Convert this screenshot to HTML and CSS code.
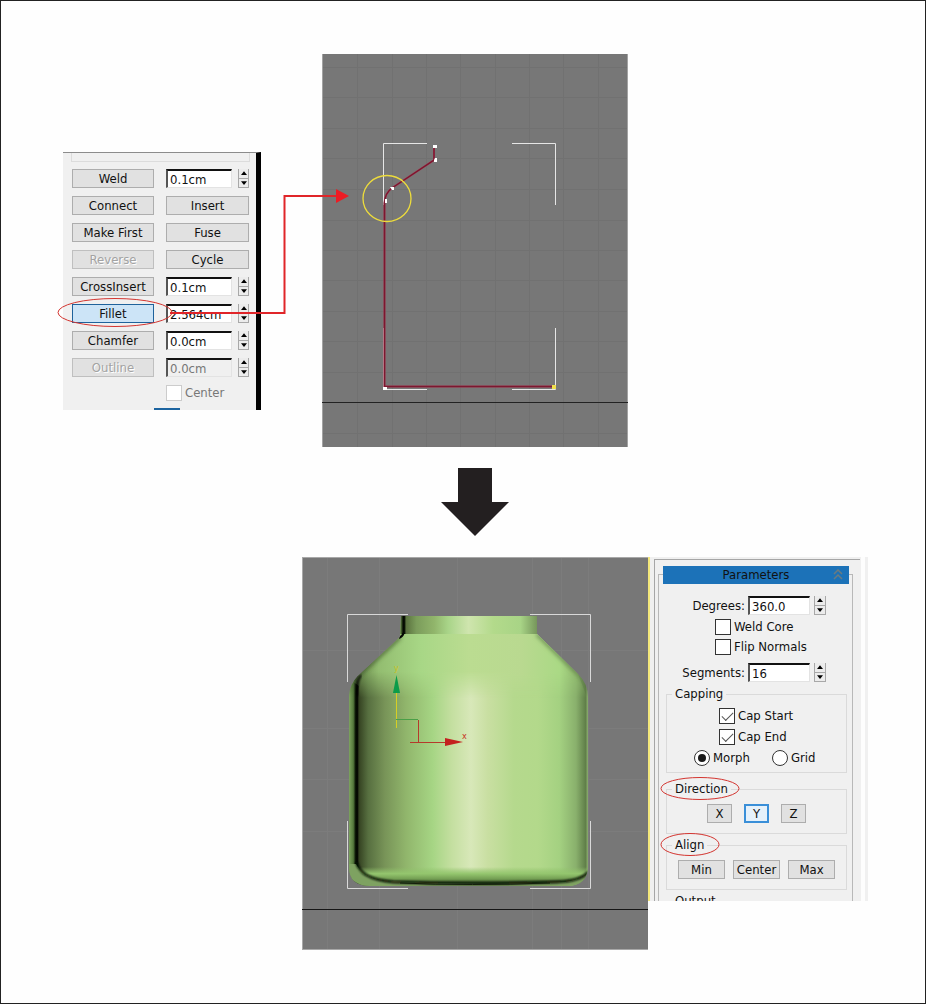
FILE: index.html
```html
<!DOCTYPE html>
<html lang="en">
<head>
<meta charset="utf-8">
<title>Fillet and Lathe</title>
<link rel="stylesheet" href="styles.css">
</head>
<body>
<main class="figure">
  <section class="step">
    <div class="panel geometry">
      <div class="group-end"></div>
      <div class="tools">
        <button class="btn">Weld</button>
        <div class="spin"><input class="num" aria-label="Weld distance" value="0.1cm"><span class="arrows"><button aria-label="Up"><svg viewBox="0 0 8 5"><path d="M0 5L4 0L8 5z"/></svg></button><button aria-label="Down"><svg viewBox="0 0 8 5"><path d="M0 0L4 5L8 0z"/></svg></button></span></div>
        <button class="btn">Connect</button>
        <button class="btn">Insert</button>
        <button class="btn">Make First</button>
        <button class="btn">Fuse</button>
        <button class="btn" disabled>Reverse</button>
        <button class="btn">Cycle</button>
        <button class="btn">CrossInsert</button>
        <div class="spin"><input class="num" aria-label="CrossInsert distance" value="0.1cm"><span class="arrows"><button aria-label="Up"><svg viewBox="0 0 8 5"><path d="M0 5L4 0L8 5z"/></svg></button><button aria-label="Down"><svg viewBox="0 0 8 5"><path d="M0 0L4 5L8 0z"/></svg></button></span></div>
        <button class="btn pressed">Fillet</button>
        <div class="spin"><input class="num" aria-label="Fillet radius" value="2.564cm"><span class="arrows"><button aria-label="Up"><svg viewBox="0 0 8 5"><path d="M0 5L4 0L8 5z"/></svg></button><button aria-label="Down"><svg viewBox="0 0 8 5"><path d="M0 0L4 5L8 0z"/></svg></button></span></div>
        <button class="btn">Chamfer</button>
        <div class="spin"><input class="num" aria-label="Chamfer distance" value="0.0cm"><span class="arrows"><button aria-label="Up"><svg viewBox="0 0 8 5"><path d="M0 5L4 0L8 5z"/></svg></button><button aria-label="Down"><svg viewBox="0 0 8 5"><path d="M0 0L4 5L8 0z"/></svg></button></span></div>
        <button class="btn" disabled>Outline</button>
        <div class="spin"><input class="num" aria-label="Outline distance" value="0.0cm" disabled><span class="arrows"><button aria-label="Up"><svg viewBox="0 0 8 5"><path d="M0 5L4 0L8 5z"/></svg></button><button aria-label="Down"><svg viewBox="0 0 8 5"><path d="M0 0L4 5L8 0z"/></svg></button></span></div>
        <label class="opt muted"><input type="checkbox" disabled>Center</label>
      </div>
      <div class="next-bar"></div>
      <svg class="callout" viewBox="53 152 300 258" width="300" height="258" aria-hidden="true">
        <ellipse cx="115" cy="312.500" rx="57" ry="14" fill="none" stroke="#d3342f"/>
        <path d="M170 313H284.500V196H337" fill="none" stroke="#e02529" stroke-width="2"/>
        <path d="M336 189L349 196L336 203z" fill="#ed1c24"/>
      </svg>
    </div>
    <svg class="view profile" viewBox="322 54 306 393" role="img" aria-label="Spline profile">
      <rect x="322" y="54" width="306" height="393" fill="#777"/>
      <path d="M357.500 54V447M392.500 54V447M426.500 54V447M460.500 54V447M495.500 54V447M529.500 54V447M563.500 54V447M598.500 54V447M322 67.500H628M322 97.500H628M322 128.500H628M322 158.500H628M322 189.500H628M322 220.500H628M322 250.500H628M322 280.500H628M322 311.500H628M322 341.500H628M322 372.500H628M322 433.500H628" stroke="#717171"/>
      <path d="M322.500 54V447M627.500 54V447" stroke="#a3a3a3"/>
      <path d="M322 402.500H628" stroke="#222"/>
      <path d="M383.500 205V143.500H427M512 143.500H555.500V205M383.500 328V389.500H427M512 389.500H555.500V328" fill="none" stroke="#e6e6e6"/>
      <path d="M434 147V160L392 188Q385 193 384.500 203V386.500H555" fill="none" stroke="#a34b5d" stroke-width="2"/>
      <path d="M434 147V160L392 188Q385 193 384.500 203V386.500H555" fill="none" stroke="#7c1730" stroke-width="1.500"/>
      <path d="M433 145h4v3h-4zM435 158h2v4h-3v-2zM390 187h4v3h-2zM385 199h2v4h-2zM383 387h4v3h-4z" fill="#fff"/>
      <rect x="552" y="385" width="4" height="4" fill="#f0df4c"/>
      <ellipse cx="387" cy="198.500" rx="24" ry="23" fill="none" stroke="#eddc3c" stroke-width="1.300"/>
    </svg>
  </section>

  <svg class="down" viewBox="0 0 68 68" aria-hidden="true"><path d="M17 0H51V34H68L34 68L0 34H17z" fill="#231f20"/></svg>

  <section class="step">
    <svg class="view model" viewBox="302 557 346 393" role="img" aria-label="Lathed bottle">
      <defs>
        <linearGradient id="body" gradientUnits="userSpaceOnUse" x1="349" y1="0" x2="588" y2="0">
          <stop offset="0" stop-color="#7da45f"/><stop offset=".018" stop-color="#55793c"/><stop offset=".028" stop-color="#071003"/><stop offset=".035" stop-color="#020500"/><stop offset=".042" stop-color="#354322"/><stop offset=".08" stop-color="#576f40"/><stop offset=".15" stop-color="#789458"/><stop offset=".24" stop-color="#91b66c"/><stop offset=".35" stop-color="#a6d584"/><stop offset=".43" stop-color="#c4dfa0"/><stop offset=".51" stop-color="#d8e8b9"/><stop offset=".58" stop-color="#c9dfa2"/><stop offset=".69" stop-color="#b5d98d"/><stop offset=".79" stop-color="#b3d98b"/><stop offset=".88" stop-color="#a4d181"/><stop offset=".95" stop-color="#89b06c"/><stop offset=".99" stop-color="#607f49"/><stop offset="1" stop-color="#8db070"/>
        </linearGradient>
        <linearGradient id="shoulder" gradientUnits="userSpaceOnUse" x1="350" y1="0" x2="588" y2="0">
          <stop offset="0" stop-color="#59773f"/><stop offset=".12" stop-color="#93bd70"/><stop offset=".3" stop-color="#a8d786"/><stop offset=".5" stop-color="#bbdc91"/><stop offset=".72" stop-color="#b9d990"/><stop offset=".88" stop-color="#aad985"/><stop offset="1" stop-color="#7fa560"/>
        </linearGradient>
        <linearGradient id="neck" gradientUnits="userSpaceOnUse" x1="400" y1="0" x2="537" y2="0">
          <stop offset="0" stop-color="#6b8f50"/><stop offset=".015" stop-color="#30451f"/><stop offset=".022" stop-color="#020500"/><stop offset=".033" stop-color="#0a1205"/><stop offset=".045" stop-color="#5b733f"/><stop offset=".12" stop-color="#7b9c5b"/><stop offset=".25" stop-color="#91b56b"/><stop offset=".35" stop-color="#a8d488"/><stop offset=".5" stop-color="#cfe5ae"/><stop offset=".68" stop-color="#b3da8b"/><stop offset=".88" stop-color="#a8d486"/><stop offset="1" stop-color="#76965b"/>
        </linearGradient>
        <linearGradient id="fade" x1="0" y1="0" x2="0" y2="1"><stop offset="0" stop-color="#fff"/><stop offset=".66" stop-color="#fff"/><stop offset="1" stop-color="#000"/></linearGradient>
        <mask id="soft"><rect x="340" y="620" width="260" height="78" fill="url(#fade)"/></mask>
        <linearGradient id="base" x1="0" y1="0" x2="0" y2="1"><stop offset="0" stop-color="#8fc069" stop-opacity="0"/><stop offset=".4" stop-color="#94c66e"/><stop offset=".72" stop-color="#729d52"/><stop offset="1" stop-color="#294019"/></linearGradient>
        <clipPath id="bottle"><path d="M401 616H537V634L578 674Q588 684 588 697V867Q587 886 567 886H370Q349 886 349 867V695Q350 684 358 676L400 637z"/></clipPath>
        <filter id="blur1" x="-10%" y="-40%" width="120%" height="180%"><feGaussianBlur stdDeviation="1"/></filter>
        <filter id="blur2" x="-10%" y="-10%" width="120%" height="120%"><feGaussianBlur stdDeviation="2"/></filter>
      </defs>
      <rect x="302" y="557" width="346" height="393" fill="#777"/>
      <path d="M327.500 557V950M379.500 557V950M457.500 557V950M532.500 557V950M561.500 557V950M588.500 557V950M302 650.500H648M302 728.500H648M302 779.500H648M302 831.500H648" stroke="#7c7c7c"/>
      <path d="M302 557.500H648M302.500 557V950M302 949.500H648" stroke="#a8a8a8"/>
      <path d="M302 909.500H648" stroke="#161616"/>
      <path d="M347.500 682V614.500H408M530 614.500H590.500V682M347.500 821V888.500H408M530 888.500H590.500V821" fill="none" stroke="#d9d9d9"/>
      <g clip-path="url(#bottle)">
        <rect x="349" y="616" width="240" height="271" fill="url(#body)"/>
        <g mask="url(#soft)"><path d="M401 632H537L578 674L588 700H359V686L352 681z" fill="url(#shoulder)"/>
          <path d="M400 637L358 676Q351 684 350 695" fill="none" stroke="#3d552b" stroke-width="3" filter="url(#blur2)"/>
          <path d="M537 634L578 674Q587 684 588 695" fill="none" stroke="#5c7b44" stroke-width="3" filter="url(#blur2)"/></g>
        <path d="M361 675Q356.500 681 356.500 696" fill="none" stroke="#030602" stroke-width="2" filter="url(#blur1)"/>
        <rect x="400" y="616" width="137" height="18" fill="url(#neck)"/>
        <path d="M403.500 633Q403 636 399 638" fill="none" stroke="#050904" stroke-width="2"/>
        <path d="M356 864Q363 877 386 882Q468 887 567 882Q584 880 588 871V888H349V864z" fill="#7ea261"/>
        <path d="M357 867H588V872Q583 879 565 882Q468 886 390 881Q366 879 357 870z" fill="url(#base)"/>
        <path d="M356.500 862Q360 879 393 882Q470 885 557 882Q581 881 588 872" fill="none" stroke="#071003" stroke-width="2.500" filter="url(#blur1)"/>
        <path d="M400 883Q470 886 550 883" fill="none" stroke="#13200b" stroke-width="1"/>
      </g>
      <path d="M396.500 692V728" stroke="#d6cf24"/>
      <path d="M396 719.500H418" stroke="#4a9f47"/>
      <path d="M418.500 720V742.500M410 742.500H446" fill="none" stroke="#b53a2b"/>
      <path d="M396.500 675L393 693H400z" fill="#0c9c49"/>
      <path d="M445 738V746L463 742z" fill="#c4211f"/>
      <text x="394" y="671" class="axis" fill="#c8c126">y</text>
      <text x="462" y="739" class="axis" fill="#c73225">x</text>
    </svg>
    <div class="panel params">
      <div class="rollout">
        <h2 class="title">Parameters<svg viewBox="0 0 10 11" width="10" height="11" aria-hidden="true"><path d="M1 5L5 1L9 5M1 10L5 6L9 10" fill="none" stroke="#6c7b80" stroke-width="1.500"/></svg></h2>
        <div class="line"><label for="deg">Degrees:</label><div class="spin"><input class="num" id="deg" value="360.0"><span class="arrows"><button aria-label="Up"><svg viewBox="0 0 8 5"><path d="M0 5L4 0L8 5z"/></svg></button><button aria-label="Down"><svg viewBox="0 0 8 5"><path d="M0 0L4 5L8 0z"/></svg></button></span></div></div>
        <div class="checks">
          <label class="opt"><input type="checkbox">Weld Core</label>
          <label class="opt"><input type="checkbox">Flip Normals</label>
        </div>
        <div class="line"><label for="seg">Segments:</label><div class="spin"><input class="num" id="seg" value="16"><span class="arrows"><button aria-label="Up"><svg viewBox="0 0 8 5"><path d="M0 5L4 0L8 5z"/></svg></button><button aria-label="Down"><svg viewBox="0 0 8 5"><path d="M0 0L4 5L8 0z"/></svg></button></span></div></div>
        <fieldset class="box capping"><legend>Capping</legend>
          <label class="opt"><input type="checkbox" checked>Cap Start</label>
          <label class="opt"><input type="checkbox" checked>Cap End</label>
          <div class="radios">
            <label class="opt"><input type="radio" name="cap" checked>Morph</label>
            <label class="opt"><input type="radio" name="cap">Grid</label>
          </div>
        </fieldset>
        <fieldset class="box"><legend>Direction<svg class="ring" viewBox="0 0 80 23" width="80" height="23" aria-hidden="true"><ellipse cx="40" cy="11.500" rx="39" ry="11" fill="none" stroke="#d3342f"/></svg></legend>
          <div class="keys axes"><button class="btn">X</button><button class="btn active">Y</button><button class="btn">Z</button></div>
        </fieldset>
        <fieldset class="box"><legend>Align<svg class="ring" viewBox="0 0 60 23" width="60" height="23" aria-hidden="true"><ellipse cx="30" cy="11.500" rx="29" ry="11" fill="none" stroke="#d3342f"/></svg></legend>
          <div class="keys aligns"><button class="btn">Min</button><button class="btn">Center</button><button class="btn">Max</button></div>
        </fieldset>
        <fieldset class="box"><legend>Output</legend></fieldset>
      </div>
    </div>
  </section>
</main>
</body>
</html>
```
FILE: styles.css
```css
* { box-sizing: border-box; }
body {
  margin: 0;
  background: #fefefe;
  color: #111;
  font: 13px/16px "DejaVu Sans Condensed", "Noto Sans", sans-serif;
}
button, input { font: inherit; color: inherit; margin: 0; }

.figure {
  min-height: 100vh;
  border: 1px solid #222;
  padding: 53px 0 0 24px;
  display: flex;
  flex-direction: column;
  gap: 21px;
}
.step {
  display: grid;
  grid-template-columns: minmax(0, 1fr) 346px minmax(0, 1fr);
  align-items: start;
}
.view { grid-column: 2; grid-row: 1; display: block; justify-self: center; }
.profile { width: 306px; }
.model { width: 346px; }
.down { width: 68px; align-self: center; display: block; }
.panel { background: #f0f0f0; grid-row: 1; }

.geometry {
  grid-column: 1;
  justify-self: end;
  position: relative;
  width: 198px;
  margin: 98px 41px 0 0;
  padding: 0 6px 0 8px;
  border-top: 1px solid #8c8c8c;
  border-right: 5px solid #000;
}
.group-end { height: 9px; border: 1px solid #dcdcdc; border-top: 0; }
.tools {
  display: grid;
  grid-template-columns: 82px 83px;
  grid-auto-rows: 19px;
  gap: 8px 12px;
  padding: 7px 0 4px 1px;
}
.tools .opt { grid-column: 2; height: 16px; }
.next-bar { width: 26px; height: 2px; margin-left: 83px; background: #1c64a0; }
.callout { position: absolute; left: -10px; top: -1px; z-index: 1; pointer-events: none; }

.btn {
  height: 19px;
  padding: 0;
  border: 1px solid #adadad;
  border-radius: 0;
  background: #e1e1e1;
  line-height: 16px;
  white-space: nowrap;
}
.btn:disabled { color: #a3a3a3; border-color: #bfbfbf; text-shadow: 1px 1px #fff; }
.btn.pressed { background: #cce4f7; border-color: #1f629b; }
.btn.active { background: #e5f1fb; border: 2px solid #3a8fd8; line-height: 14px; }

.spin { display: flex; gap: 6px; height: 19px; }
.num {
  width: 66px;
  height: 19px;
  padding: 0 2px;
  border: 1px solid #e3e3e3;
  border-top: 2px solid #111;
  border-left: 2px solid #555;
  border-radius: 0;
  background: #fff;
}
.num:disabled { background: #f0f0f0; color: #777; }
.arrows { display: flex; flex-direction: column; width: 12px; }
.arrows button {
  flex: 1;
  padding: 0;
  border: 1px solid #a8a8a8;
  border-width: 0 1px 1px;
  background: #ececec;
  display: flex;
  align-items: center;
  justify-content: center;
}
.arrows svg { width: 6px; height: 4px; }

.opt { display: flex; align-items: center; gap: 3px; white-space: nowrap; }
.opt input {
  appearance: none;
  flex: none;
  width: 16px;
  height: 16px;
  border: 1px solid #333;
  background: #fff;
  display: grid;
  place-items: center;
}
.opt input[type="radio"] { border-radius: 50%; }
.opt input[type="checkbox"]:checked::after {
  content: "";
  width: 10px;
  height: 5px;
  margin-bottom: 3px;
  border: solid #555;
  border-width: 0 0 1px 1px;
  transform: rotate(-45deg);
}
.opt input[type="radio"]:checked::after { content: ""; width: 8px; height: 8px; border-radius: 50%; background: #1a1a1a; }
.muted { color: #777; }
.muted input { border-color: #ccc; }

.params {
  grid-column: 3;
  justify-self: start;
  width: 220px;
  height: 344px;
  overflow: hidden;
  padding: 2px 8px 0 4px;
  border-left: 2px solid #f3e77a;
  background: linear-gradient(90deg, #f0f0f0 211px, #fdfdfd 211px, #fdfdfd 215px, #f0f0f0 215px);
}
.rollout {
  border: 1px solid #a6a6a6;
  border-right: 0;
  padding: 6px 11px 0 8px;
  position: relative;
}
.rollout::before {
  content: "";
  position: absolute;
  inset: 14px 7px 0 3px;
  border: 1px solid #b8b8b8;
}
.title {
  position: relative;
  margin: 0 0 12px;
  height: 18px;
  background: #1c72b8;
  font: inherit;
  line-height: 17px;
  text-align: center;
}
.title svg { position: absolute; right: 6px; top: 3px; }
.line { position: relative; display: flex; justify-content: flex-end; align-items: center; gap: 3px; padding-right: 23px; height: 19px; }
.params .spin { gap: 4px; }
.params .num { width: 62px; }
.checks { position: relative; display: grid; gap: 4px; padding: 4px 0 8px 52px; }
.box {
  position: relative;
  min-width: 0;
  margin: 0 2px 3px 3px;
  padding: 7px 0 10px;
  border: 1px solid #dadada;
}
.box legend { position: relative; margin-left: 5px; padding: 0 3px; }
.capping { margin-top: 4px; margin-bottom: 8px; padding: 6px 0; }
.capping > .opt { margin: 0 0 5px 52px; }
.radios { display: flex; gap: 22px; padding-left: 27px; }
.keys { display: flex; justify-content: center; }
.axes { gap: 12px; }
.axes .btn { width: 25px; }
.aligns { gap: 8px; }
.aligns .btn { width: 47px; }
.ring { position: absolute; left: -12px; top: -4px; pointer-events: none; }
.axis { font: 9px "DejaVu Sans Condensed", sans-serif; }
```
